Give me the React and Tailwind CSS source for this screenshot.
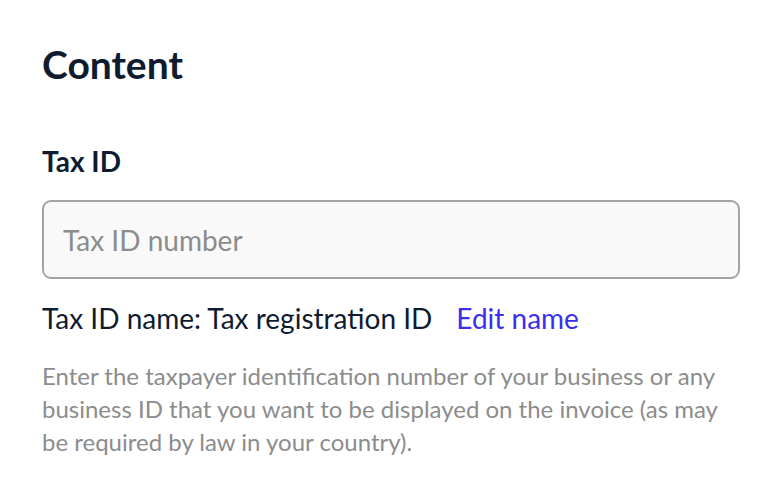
import React, { useState } from 'react';

function App() {
  const [taxId, setTaxId] = useState('');

  return (
    <div className="min-h-screen bg-white font-['Lato',sans-serif] px-[42px] pt-[40px]">
      <h1 className="text-[39px] leading-[48px] font-bold text-[#0f1c30] m-0">Content</h1>

      <div className="mt-[56px]">
        <label className="block text-[28px] leading-[34px] font-bold text-[#0f1c30]">Tax ID</label>
        <input
          type="text"
          value={taxId}
          onChange={(e) => setTaxId(e.target.value)}
          placeholder="Tax ID number"
          className="mt-[22px] block w-[698px] h-[79px] px-[19px] bg-[#f9f9f9] border-2 border-[#a3a3a3] rounded-[9px] text-[28px] text-[#0f1c30] placeholder:text-[#8c8c8c] outline-none"
        />

        <div className="mt-[22px] flex items-center text-[28px] leading-[34px] text-[#0f1c30]">
          <span>Tax ID name: Tax registration ID</span>
          <button className="ml-[24px] text-[#3a2ff0] cursor-pointer">Edit name</button>
        </div>

        <p className="mt-[24px] max-w-[700px] text-[24px] leading-[33px] text-[#8c8c8c]">
          Enter the taxpayer identification number of your business or any business ID that you want to be displayed on the invoice (as may be required by law in your country).
        </p>
      </div>
    </div>
  );
}

export default App;
